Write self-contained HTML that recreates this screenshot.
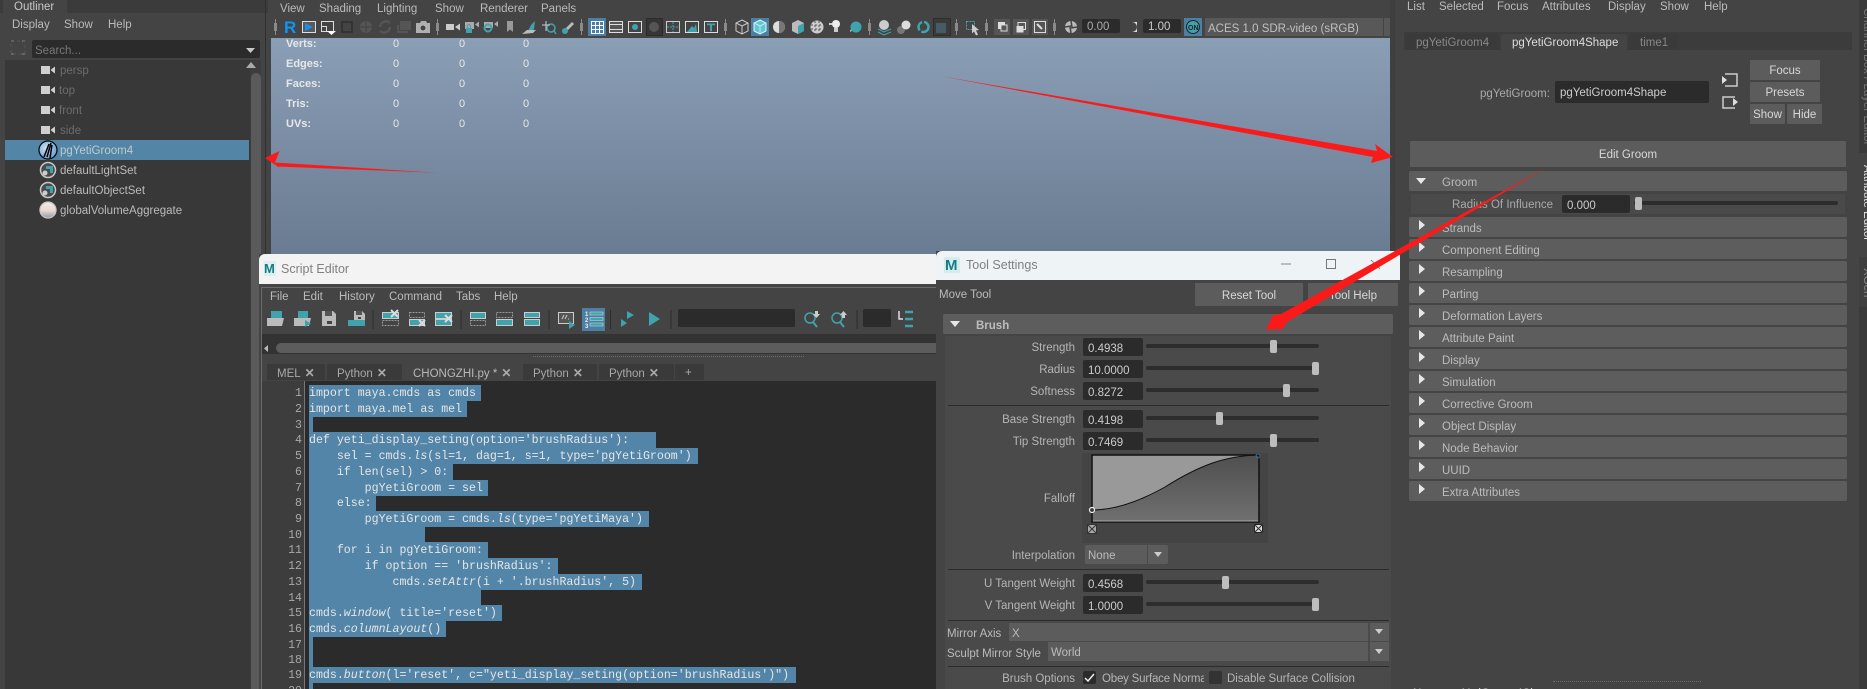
<!DOCTYPE html>
<html><head><meta charset="utf-8"><title>Maya</title>
<style>
html,body{margin:0;padding:0;width:1867px;height:689px;overflow:hidden;background:#444}
#r{position:relative;width:1867px;height:689px;overflow:hidden;background:#444;font:11.5px/14px "Liberation Sans",sans-serif;color:#bbb}
#r div{position:absolute;white-space:nowrap}
.m{line-height:16px;height:14px}
.d{color:#6c6c6c}
.b{background:#5c5c5c;color:#d8d8d8;text-align:center;border-radius:1px}
.f{left:1409px;width:438px;height:20px;background:#5d5d5d;border-radius:2px;line-height:24px;text-indent:33px;color:#bcbcbc}
.f i{position:absolute;left:10px;top:3px;width:0;height:0;border-left:6px solid #e8e8e8;border-top:5.5px solid transparent;border-bottom:5.5px solid transparent}
.in{background:#2b2b2b;border-radius:2px;color:#ccc;line-height:22px;text-indent:5px}
.tr{left:1146px;width:173px;height:4px;background:#2d2d2d;border-radius:2px}
.h{width:7px;height:13px;background:#bdbdbd;border-radius:2px}
.lb{right:792px;text-align:right;height:14px;line-height:16px;color:#b5b5b5}
.sep{left:948px;width:441px;height:1px;background:#2c2c2c}
.st{left:286px;color:#e8e8e8;height:14px;line-height:16px;font-size:11px;font-weight:bold}
.z{color:#e8e8e8;height:14px;line-height:16px;font-size:11px}
.tab{top:364px;height:16px;background:#3a3a3a;line-height:19px;color:#a8a8a8;border-radius:2px 2px 0 0;text-indent:10px}
.tab b{color:#aaa;margin-left:4px;font-size:12px}
#r div.l{left:309px;height:16px;background:#5285a8;font:11.6px/18px "Liberation Mono",monospace;color:#e6e6e6;white-space:pre}
.n{left:261px;width:41px;text-align:right;height:16px;font:11.6px/18px "Liberation Mono",monospace;color:#a8a8a8}
.v{writing-mode:vertical-rl;left:1860px;width:14px;line-height:14px}
</style></head><body><div id="r">

<!-- Outliner -->
<div style="left:0;top:0;width:268px;height:13px;background:#3b3b3b"></div>
<div style="left:3px;top:0;width:64px;height:13px;background:#444"></div>
<div class="m" style="left:14px;top:-1px;color:#c8c8c8">Outliner</div>
<div class="m" style="left:12px;top:17px">Display</div>
<div class="m" style="left:64px;top:17px">Show</div>
<div class="m" style="left:108px;top:17px">Help</div>
<div style="left:32px;top:40px;width:228px;height:18px;background:#2b2b2b;border-radius:2px;line-height:22px;text-indent:3px;color:#777">Search...</div>
<div style="left:5px;top:60px;width:245px;height:629px;background:#383838"></div>
<div style="left:250px;top:60px;width:11px;height:629px;background:#3d3d3d"></div>
<div style="left:251px;top:73px;width:10px;height:616px;background:#5a5a5a;border-radius:5px 5px 0 0"></div>
<div class="m d" style="left:60px;top:63px">persp</div>
<div class="m d" style="left:59px;top:83px">top</div>
<div class="m d" style="left:59px;top:103px">front</div>
<div class="m d" style="left:60px;top:123px">side</div>
<div style="left:5px;top:140px;width:244px;height:20px;background:#5285a6"></div>
<div class="m" style="left:60px;top:143px;color:#bfc9d0">pgYetiGroom4</div>
<div class="m" style="left:60px;top:163px">defaultLightSet</div>
<div class="m" style="left:60px;top:183px">defaultObjectSet</div>
<div class="m" style="left:60px;top:203px">globalVolumeAggregate</div>
<div style="left:265px;top:0;width:1px;height:254px;background:#303030"></div>

<!-- Viewport -->
<div style="left:271px;top:38px;width:1119px;height:220px;background:linear-gradient(#8a9eb6,#697b91)"></div>
<div class="m" style="left:280px;top:1px">View</div>
<div class="m" style="left:319px;top:1px">Shading</div>
<div class="m" style="left:377px;top:1px">Lighting</div>
<div class="m" style="left:435px;top:1px">Show</div>
<div class="m" style="left:480px;top:1px">Renderer</div>
<div class="m" style="left:541px;top:1px">Panels</div>
<div class="st" style="top:36px">Verts:</div><div class="st" style="top:56px">Edges:</div><div class="st" style="top:76px">Faces:</div><div class="st" style="top:96px">Tris:</div><div class="st" style="top:116px">UVs:</div>
<div class="z" style="left:393px;top:36px">0</div><div class="z" style="left:459px;top:36px">0</div><div class="z" style="left:523px;top:36px">0</div>
<div class="z" style="left:393px;top:56px">0</div><div class="z" style="left:459px;top:56px">0</div><div class="z" style="left:523px;top:56px">0</div>
<div class="z" style="left:393px;top:76px">0</div><div class="z" style="left:459px;top:76px">0</div><div class="z" style="left:523px;top:76px">0</div>
<div class="z" style="left:393px;top:96px">0</div><div class="z" style="left:459px;top:96px">0</div><div class="z" style="left:523px;top:96px">0</div>
<div class="z" style="left:393px;top:116px">0</div><div class="z" style="left:459px;top:116px">0</div><div class="z" style="left:523px;top:116px">0</div>
<div style="left:588px;top:18px;width:18px;height:18px;background:#4b7fa3"></div>
<div style="left:646px;top:18px;width:17px;height:18px;background:#353535;box-sizing:border-box;border:1px solid #2b2b2b"></div>
<div style="left:751px;top:18px;width:18px;height:18px;background:#4b7fa3"></div>
<div style="left:933px;top:18px;width:18px;height:18px;background:#3a3a3a;box-sizing:border-box;border:1px solid #2e2e2e"></div>
<div style="left:994px;top:19px;width:16px;height:16px;background:#555"></div>
<div style="left:1013px;top:19px;width:16px;height:16px;background:#555"></div>
<div style="left:1032px;top:19px;width:16px;height:16px;background:#555"></div>
<div class="in" style="left:1082px;top:19px;width:38px;height:14px;line-height:17px;color:#aaa">0.00</div>
<div class="in" style="left:1143px;top:19px;width:38px;height:14px;line-height:17px">1.00</div>
<div style="left:1184px;top:18px;width:18px;height:18px;background:#4b7fa3"></div>
<div style="left:1205px;top:18px;width:178px;height:18px;background:#585858;line-height:22px;text-indent:3px;color:#c0c0c0">ACES 1.0 SDR-video (sRGB)</div>
<div style="left:1384px;top:18px;width:6px;height:18px;background:#585858"></div>

<!-- Attribute Editor -->
<div style="left:1390px;top:0;width:5px;height:689px;background:#3f3f3f"></div>
<div class="m" style="left:1407px;top:-1px">List</div>
<div class="m" style="left:1439px;top:-1px">Selected</div>
<div class="m" style="left:1497px;top:-1px">Focus</div>
<div class="m" style="left:1542px;top:-1px">Attributes</div>
<div class="m" style="left:1608px;top:-1px">Display</div>
<div class="m" style="left:1660px;top:-1px">Show</div>
<div class="m" style="left:1704px;top:-1px">Help</div>
<div style="left:1404px;top:32px;width:448px;height:18px;background:#3c3c3c"></div>
<div style="left:1406px;top:34px;width:93px;height:16px;background:#3a3a3a;border:0;border-radius:3px 3px 0 0;line-height:19px;text-indent:10px;color:#888">pgYetiGroom4</div>
<div style="left:1501px;top:34px;width:126px;height:16px;background:#444;border-radius:3px 3px 0 0;line-height:19px;text-indent:11px;color:#ddd">pgYetiGroom4Shape</div>
<div style="left:1629px;top:34px;width:49px;height:16px;background:#3a3a3a;border-radius:3px 3px 0 0;line-height:19px;text-indent:11px;color:#888">time1</div>
<div class="m" style="left:1480px;top:86px;color:#aaa">pgYetiGroom:</div>
<div class="in" style="left:1555px;top:81px;width:154px;height:22px;line-height:24px">pgYetiGroom4Shape</div>
<div class="b" style="left:1750px;top:60px;width:70px;height:20px;line-height:23px">Focus</div>
<div class="b" style="left:1750px;top:82px;width:70px;height:20px;line-height:23px">Presets</div>
<div class="b" style="left:1750px;top:104px;width:35px;height:20px;line-height:23px">Show</div>
<div class="b" style="left:1787px;top:104px;width:35px;height:20px;line-height:23px">Hide</div>
<div class="b" style="left:1410px;top:141px;width:436px;height:26px;line-height:29px">Edit Groom</div>
<div class="f" style="top:171px"><i style="left:7px;top:7px;border-top:6px solid #e8e8e8;border-left:5.5px solid transparent;border-right:5.5px solid transparent;border-bottom:0"></i>Groom</div>
<div style="left:1411px;top:194px;width:434px;height:20px;background:#4a4a4a"></div>
<div class="m" style="left:1452px;top:197px;color:#aaa">Radius Of Influence</div>
<div class="in" style="left:1562px;top:195px;width:68px;height:18px">0.000</div>
<div style="left:1634px;top:201px;width:204px;height:4px;background:#2d2d2d;border-radius:2px"></div>
<div class="h" style="left:1635px;top:197px"></div>
<div class="f" style="top:217px"><i></i>Strands</div>
<div class="f" style="top:239px"><i></i>Component Editing</div>
<div class="f" style="top:261px"><i></i>Resampling</div>
<div class="f" style="top:283px"><i></i>Parting</div>
<div class="f" style="top:305px"><i></i>Deformation Layers</div>
<div class="f" style="top:327px"><i></i>Attribute Paint</div>
<div class="f" style="top:349px"><i></i>Display</div>
<div class="f" style="top:371px"><i></i>Simulation</div>
<div class="f" style="top:393px"><i></i>Corrective Groom</div>
<div class="f" style="top:415px"><i></i>Object Display</div>
<div class="f" style="top:437px"><i></i>Node Behavior</div>
<div class="f" style="top:459px"><i></i>UUID</div>
<div class="f" style="top:481px"><i></i>Extra Attributes</div>
<div style="left:1553px;top:681px;width:148px;height:0;border-top:1px dotted #6e6e6e"></div>
<div class="m" style="left:1413px;top:686px;color:#ddd">Notes: pgYetiGroom4Shape</div>
<div style="left:1859px;top:0;width:8px;height:689px;background:#3a3a3a"></div>
<div style="left:1859px;top:153px;width:8px;height:104px;background:#444"></div>
<div style="left:1859px;top:257px;width:8px;height:50px;background:#3f3f3f"></div>
<div class="v" style="top:8px;color:#777">Channel Box / Layer Editor</div>
<div class="v" style="top:165px;color:#e0e0e0">Attribute Editor</div>
<div class="v" style="top:268px;color:#888">XGen</div>

<!-- Script Editor -->
<div style="left:259px;top:254px;width:690px;height:435px;background:#444"></div>
<div style="left:259px;top:254px;width:690px;height:30px;background:#f3f3f3;border-radius:6px 6px 0 0"></div>
<div style="left:281px;top:262px;font-size:12.5px;color:#808080">Script Editor</div>
<div style="left:261px;top:287px;width:1px;height:402px;background:#6a6a6a"></div>
<div style="left:261px;top:287px;width:680px;height:1px;background:#6a6a6a"></div>
<div class="m" style="left:270px;top:289px">File</div>
<div class="m" style="left:303px;top:289px">Edit</div>
<div class="m" style="left:339px;top:289px">History</div>
<div class="m" style="left:389px;top:289px">Command</div>
<div class="m" style="left:456px;top:289px">Tabs</div>
<div class="m" style="left:494px;top:289px">Help</div>
<div style="left:582px;top:308px;width:23px;height:23px;background:#4b7fa3"></div>
<div style="left:678px;top:309px;width:117px;height:18px;background:#2b2b2b;border-radius:2px"></div>
<div style="left:863px;top:309px;width:28px;height:18px;background:#2b2b2b;border-radius:2px"></div>
<div style="left:262px;top:334px;width:680px;height:20px;background:#333"></div>
<div style="left:276px;top:343px;width:670px;height:10px;background:#5c5c5c;border-radius:5px"></div>
<div style="left:533px;top:356px;width:271px;height:0;border-top:1px dotted #6e6e6e"></div>
<div class="tab" style="left:267px;width:58px">MEL<b>✕</b></div>
<div class="tab" style="left:327px;width:75px">Python<b>✕</b></div>
<div class="tab" style="left:403px;width:118px;background:#444;color:#b8b8b8">CHONGZHI.py *<b>✕</b></div>
<div class="tab" style="left:523px;width:74px">Python<b>✕</b></div>
<div class="tab" style="left:599px;width:75px">Python<b>✕</b></div>
<div class="tab" style="left:675px;width:29px">+</div>
<div style="left:262px;top:381px;width:42px;height:308px;background:#3d3d3d"></div>
<div style="left:304px;top:381px;width:1px;height:308px;background:#777"></div>
<div style="left:305px;top:381px;width:640px;height:308px;background:#2b2b2b"></div>

<div class="n" style="top:385px">1</div><div class="l" style="top:385px;width:172px">import maya.cmds as cmds</div>
<div class="n" style="top:401px">2</div><div class="l" style="top:401px;width:158px">import maya.mel as mel</div>
<div class="n" style="top:417px">3</div><div class="l" style="top:417px;width:4px"></div>
<div class="n" style="top:432px">4</div><div class="l" style="top:432px;width:347px">def yeti_display_seting(option='brushRadius'):</div>
<div class="n" style="top:448px">5</div><div class="l" style="top:448px;width:389px">    sel = cmds.<i>ls</i>(sl=1, dag=1, s=1, type='pgYetiGroom')</div>
<div class="n" style="top:464px">6</div><div class="l" style="top:464px;width:144px">    if len(sel) &gt; 0:</div>
<div class="n" style="top:480px">7</div><div class="l" style="top:480px;width:179px">        pgYetiGroom = sel</div>
<div class="n" style="top:495px">8</div><div class="l" style="top:495px;width:67px">    else:</div>
<div class="n" style="top:511px">9</div><div class="l" style="top:511px;width:340px">        pgYetiGroom = cmds.<i>ls</i>(type='pgYetiMaya')</div>
<div class="n" style="top:527px">10</div><div class="l" style="top:527px;width:116px"></div>
<div class="n" style="top:542px">11</div><div class="l" style="top:542px;width:179px">    for i in pgYetiGroom:</div>
<div class="n" style="top:558px">12</div><div class="l" style="top:558px;width:249px">        if option == 'brushRadius':</div>
<div class="n" style="top:574px">13</div><div class="l" style="top:574px;width:333px">            cmds.<i>setAttr</i>(i + '.brushRadius', 5)</div>
<div class="n" style="top:590px">14</div><div class="l" style="top:590px;width:172px"></div>
<div class="n" style="top:605px">15</div><div class="l" style="top:605px;width:193px">cmds.<i>window</i>( title='reset')</div>
<div class="n" style="top:621px">16</div><div class="l" style="top:621px;width:137px">cmds.<i>columnLayout</i>()</div>
<div class="n" style="top:637px">17</div><div class="l" style="top:637px;width:4px"></div>
<div class="n" style="top:652px">18</div><div class="l" style="top:652px;width:4px"></div>
<div class="n" style="top:667px">19</div><div class="l" style="top:667px;width:487px">cmds.<i>button</i>(l='reset', c="yeti_display_seting(option='brushRadius')")</div>
<div class="n" style="top:683px">20</div><div class="l" style="top:683px;width:4px"></div>

<!-- Tool Settings -->
<div style="left:936px;top:251px;width:464px;height:438px;background:#444"></div>
<div style="left:936px;top:251px;width:464px;height:29px;background:#eef4f6;border-radius:6px 6px 0 0"></div>
<div style="left:966px;top:258px;font-size:12.5px;color:#808080">Tool Settings</div>
<div class="m" style="left:939px;top:287px">Move Tool</div>
<div class="b" style="left:1195px;top:283px;width:108px;height:23px;line-height:26px">Reset Tool</div>
<div class="b" style="left:1308px;top:283px;width:90px;height:23px;line-height:26px">Tool Help</div>
<div class="f" style="left:943px;top:314px;width:450px;text-indent:33px;font-weight:bold"><i style="left:7px;top:7px;border-top:6px solid #e8e8e8;border-left:5.5px solid transparent;border-right:5.5px solid transparent;border-bottom:0"></i>Brush</div>
<div style="left:945px;top:336px;width:446px;height:353px;background:#4a4a4a"></div>
<div class="lb" style="top:340px">Strength</div><div class="in" style="left:1083px;top:338px;width:60px;height:18px">0.4938</div><div class="tr" style="top:344px"></div><div class="h" style="left:1270px;top:340px"></div>
<div class="lb" style="top:362px">Radius</div><div class="in" style="left:1083px;top:360px;width:60px;height:18px">10.0000</div><div class="tr" style="top:366px"></div><div class="h" style="left:1312px;top:362px"></div>
<div class="lb" style="top:384px">Softness</div><div class="in" style="left:1083px;top:382px;width:60px;height:18px">0.8272</div><div class="tr" style="top:388px"></div><div class="h" style="left:1283px;top:384px"></div>
<div class="sep" style="top:405px"></div>
<div class="lb" style="top:412px">Base Strength</div><div class="in" style="left:1083px;top:410px;width:60px;height:18px">0.4198</div><div class="tr" style="top:416px"></div><div class="h" style="left:1216px;top:412px"></div>
<div class="lb" style="top:434px">Tip Strength</div><div class="in" style="left:1083px;top:432px;width:60px;height:18px">0.7469</div><div class="tr" style="top:438px"></div><div class="h" style="left:1270px;top:434px"></div>
<div style="left:1082px;top:453px;width:186px;height:90px;background:#444"></div>
<div class="lb" style="top:491px">Falloff</div>
<div class="lb" style="top:548px">Interpolation</div>
<div style="left:1085px;top:545px;width:62px;height:19px;background:#5c5c5c;border-radius:2px 0 0 2px;line-height:23px;text-indent:3px">None</div>
<div style="left:1148px;top:545px;width:20px;height:19px;background:#5c5c5c;border-radius:0 2px 2px 0"></div>
<div style="left:1154px;top:552px;width:0;height:0;border-top:5px solid #ccc;border-left:4.5px solid transparent;border-right:4.5px solid transparent"></div>
<div class="sep" style="top:569px"></div>
<div class="lb" style="top:576px">U Tangent Weight</div><div class="in" style="left:1083px;top:574px;width:60px;height:18px">0.4568</div><div class="tr" style="top:580px"></div><div class="h" style="left:1222px;top:576px"></div>
<div class="lb" style="top:598px">V Tangent Weight</div><div class="in" style="left:1083px;top:596px;width:60px;height:18px">1.0000</div><div class="tr" style="top:602px"></div><div class="h" style="left:1312px;top:598px"></div>
<div class="sep" style="top:620px"></div>
<div class="m" style="left:947px;top:626px">Mirror Axis</div>
<div style="left:1009px;top:623px;width:359px;height:18px;background:#5c5c5c;line-height:22px;text-indent:3px">X</div>
<div style="left:1370px;top:623px;width:19px;height:18px;background:#5c5c5c"></div>
<div style="left:1375px;top:629px;width:0;height:0;border-top:5px solid #ccc;border-left:4.5px solid transparent;border-right:4.5px solid transparent"></div>
<div class="m" style="left:947px;top:646px">Sculpt Mirror Style</div>
<div style="left:1048px;top:642px;width:320px;height:19px;background:#5c5c5c;line-height:23px;text-indent:3px">World</div>
<div style="left:1370px;top:642px;width:19px;height:19px;background:#5c5c5c"></div>
<div style="left:1375px;top:649px;width:0;height:0;border-top:5px solid #ccc;border-left:4.5px solid transparent;border-right:4.5px solid transparent"></div>
<div class="sep" style="top:666px"></div>
<div class="lb" style="top:671px">Brush Options</div>
<div style="left:1083px;top:671px;width:13px;height:13px;background:#2b2b2b;border-radius:2px"></div>
<div style="left:1102px;top:671px;width:102px;overflow:hidden;height:16px;line-height:16px;color:#b5b5b5;letter-spacing:-.2px">Obey Surface Normals</div>
<div style="left:1209px;top:671px;width:13px;height:13px;background:#333;border-radius:2px"></div>
<div class="m" style="left:1227px;top:671px;color:#b5b5b5">Disable Surface Collision</div>

<!-- Icons and annotations -->
<svg width="1867" height="689" viewBox="0 0 1867 689" style="position:absolute;left:0;top:0" fill="none">
<defs>
<linearGradient id="fa" x1="0" y1="0" x2="0" y2="1"><stop offset="0" stop-color="#4f4f4f"/><stop offset="1" stop-color="#707070"/></linearGradient>
<radialGradient id="bl" cx=".4" cy=".4" r=".7"><stop offset="0" stop-color="#cfe4f7"/><stop offset="1" stop-color="#5d96cf"/></radialGradient>
<linearGradient id="gv" x1="0" y1="0" x2="0" y2="1"><stop offset="0" stop-color="#eee"/><stop offset=".55" stop-color="#ead8d0"/><stop offset="1" stop-color="#8f97ad"/></linearGradient>
</defs>
<!-- outliner icons -->
<path d="M11 41h3M22 41h3M11 54h3M22 54h3" stroke="#666" stroke-width="2"/><rect x="11" y="41" width="14" height="13" stroke="#555" stroke-dasharray="3 3"/>
<path d="M246 48h9l-4.500 5z" fill="#c8c8c8"/><path d="M251 62l5 6h-10z" fill="#aaa"/>
<g fill="#cfcfcf"><path d="M41 66h9v8h-9zM51 69.500l4-3v7l-4-3z"/><path d="M41 86h9v8h-9zM51 89.500l4-3v7l-4-3z"/><path d="M41 106h9v8h-9zM51 109.500l4-3v7l-4-3z"/><path d="M41 126h9v8h-9zM51 129.500l4-3v7l-4-3z"/></g>
<circle cx="48" cy="150" r="9" fill="url(#bl)" stroke="#000" stroke-width="1.200"/><path d="M44 157l5-13M47 157l4-14M50 158l2-13" stroke="#000" stroke-width="1.500"/>
<circle cx="48" cy="170" r="7.500" fill="#4a4a4a" stroke="#c8c8c8" stroke-width="1.500"/><path d="M46 166h7v7h-3v-4h-4z" fill="#3fa3ad"/><circle cx="45" cy="173" r="2.500" fill="#ccc"/>
<circle cx="48" cy="190" r="7.500" fill="#4a4a4a" stroke="#c8c8c8" stroke-width="1.500"/><path d="M46 186h7v7h-3v-4h-4z" fill="#3fa3ad"/><circle cx="45" cy="193" r="2.500" fill="#ccc"/>
<circle cx="48" cy="210" r="8" fill="url(#gv)" stroke="#c8c8c8" stroke-width="1.300"/>

<!-- viewport toolbar -->
<g fill="#8a8a8a"><path d="M275 19h1v4h1v8h-1v4h-1v-4h-1v-8h1zM437 19h1v4h1v8h-1v4h-1v-4h-1v-8h1zM581 19h1v4h1v8h-1v4h-1v-4h-1v-8h1zM725 19h1v4h1v8h-1v4h-1v-4h-1v-8h1zM869 19h1v4h1v8h-1v4h-1v-4h-1v-8h1zM956 19h1v4h1v8h-1v4h-1v-4h-1v-8h1zM986 19h1v4h1v8h-1v4h-1v-4h-1v-8h1zM1054 19h1v4h1v8h-1v4h-1v-4h-1v-8h1z"/></g>
<text x="284" y="33" font-family="Liberation Sans" font-weight="bold" font-size="17" fill="#0d96f2">R</text>
<rect x="302.500" y="21.500" width="13" height="11" fill="#5a5a5a" stroke="#ddd"/><path d="M305 23l8 4-8 4z" fill="#1b8ef0"/>
<path d="M321.500 21.500h12v10h-12zM321.500 26.500h5v5" stroke="#ddd"/><path d="M327 31h9l-4.500 4z" fill="#fff"/>
<rect x="342" y="22" width="10" height="10" stroke="#333" stroke-width="2"/>
<circle cx="366" cy="27" r="6" fill="#555"/><path d="M360 27h12M366 21v12" stroke="#444"/>
<path d="M380 27a6 6 0 0 1 10-4M390 27a6 6 0 0 1-10 4" stroke="#555" stroke-width="2.500"/>
<rect x="400" y="21" width="11" height="9" fill="#555"/><path d="M398 25v7h10" stroke="#555" stroke-width="2"/>
<path d="M416 23h4l1-2h5l1 2h3v10h-14z" fill="#b0b0b0"/><circle cx="423" cy="28" r="3" fill="#444" stroke="#b8b8b8"/>
<path d="M446 24h8v6h-8zM455 27l5-3.500v7z" fill="#ccc"/>
<path d="M465 22h9v7h-9zM475 24.500l4-3v6z" fill="#aaa"/><rect x="466" y="28" width="6" height="5" fill="#3fa3ad"/><path d="M467.500 28v-2a1.500 1.500 0 0 1 3 0v2" stroke="#3fa3ad"/>
<path d="M484 22h9v6h-9zM494 24l4-3v6z" fill="#aaa"/><circle cx="488" cy="28" r="3.500" stroke="#3fa3ad" stroke-width="2"/>
<path d="M507 21h6v11l-3-2.500-3 2.500z" fill="#999"/>
<path d="M527 33l4-8 4-4-1 8-4 4z" fill="#3fa3ad"/><path d="M522 34l5-4h9l-3 3z" fill="#bbb"/>
<circle cx="551" cy="28" r="4" stroke="#3fa3ad" stroke-width="1.500"/><path d="M554 31l2 3" stroke="#3fa3ad" stroke-width="1.500"/><path d="M546 21v10M542 25h8" stroke="#ccc"/>
<path d="M566 28l6-6 2 2-6 6z" fill="#bbb"/><circle cx="565" cy="31" r="3" fill="#3fa3ad"/>
<rect x="591.500" y="21.500" width="12" height="12" stroke="#fff"/><path d="M595.500 21v12M599.500 21v12M591 25.500h12M591 29.500h12" stroke="#fff"/>
<rect x="609.500" y="21.500" width="13" height="11" fill="#555" stroke="#ddd"/><path d="M609 24.500h14M609 29.500h14" stroke="#ddd"/>
<rect x="628.500" y="21.500" width="13" height="11" stroke="#ddd"/><circle cx="635" cy="27" r="3" fill="#3fa3ad"/>
<circle cx="654" cy="27" r="5" fill="#555"/>
<rect x="666.500" y="21.500" width="13" height="11" stroke="#ccc"/><path d="M673 22v10M667 27h12" stroke="#3fa3ad" stroke-dasharray="2 1"/>
<rect x="685.500" y="21.500" width="13" height="11" stroke="#ddd"/><path d="M687 32l5-6 2 2 2-4 1 8z" fill="#3fa3ad"/>
<rect x="704.500" y="21.500" width="13" height="11" stroke="#ddd"/><path d="M707 23.500h8v1.700h-3v6h-2v-6h-3z" fill="#3fa3ad"/>
<path d="M742 20l6 3v8l-6 3-6-3v-8zM736 23l6 3 6-3M742 26v8" stroke="#ccc"/>
<path d="M760 20l6 3v8l-6 3-6-3v-8z" fill="#63c6d2" stroke="#dff"/><path d="M754 23l6 3 6-3M760 26v8" stroke="#bfeef4"/>
<circle cx="779" cy="27" r="6" fill="#ddd"/><path d="M779 21a6 6 0 0 1 0 12z" fill="#777"/>
<path d="M798 20l6 3v8l-6 3-6-3v-8z" fill="#bbb"/><path d="M798 26l6-3v8l-6 3z" fill="#3fa3ad"/>
<circle cx="817" cy="27" r="6.500" fill="#ccc"/><path d="M811 25h12M811 29h12M815 21v12M819 21v12" stroke="#555" stroke-dasharray="2 2"/>
<path d="M829 24h3" stroke="#ccc" stroke-width="2"/>
<circle cx="836" cy="24" r="4" fill="#eee"/><rect x="834" y="28" width="4" height="4" fill="#ccc"/>
<path d="M850 32l6-3v-2l-6 3z" fill="#aaa"/><circle cx="856" cy="27" r="5.500" fill="#3fa3ad"/>
<circle cx="884" cy="25" r="5" fill="#ccc"/><path d="M878 29l6 3 7-3M878 32l6 3 7-3" stroke="#3fa3ad"/>
<circle cx="901" cy="30" r="4" fill="#777"/><circle cx="906" cy="25" r="4.500" fill="#ddd"/>
<circle cx="923.500" cy="27" r="5" stroke="#3fa3ad" stroke-width="2.500" stroke-dasharray="10 2"/>
<rect x="936" y="23" width="10" height="10" fill="#455c64"/>
<rect x="966.500" y="21.500" width="8" height="8" stroke="#3fa3ad" stroke-dasharray="2 1"/><path d="M972 24l7 6-3 .5 2 4-2 1-2-4-2 2z" fill="#ccc"/>
<rect x="998" y="22" width="7" height="7" fill="#ddd"/><rect x="1001" y="25" width="6" height="6" fill="#555" stroke="#ddd"/>
<rect x="1018" y="22.500" width="7.500" height="7" stroke="#ddd"/><rect x="1016.500" y="26" width="7" height="6.500" fill="#ddd"/>
<rect x="1034.500" y="21.500" width="11" height="11" stroke="#ddd"/><path d="M1037 24l5 5" stroke="#ddd" stroke-width="2"/>
<circle cx="1071" cy="27" r="6" fill="#bbb"/><path d="M1071 21l1 6M1077 27l-6 1M1071 33l-1-6M1065 27l6-1" stroke="#444" stroke-width="1.500"/>
<path d="M1132 22h5v10h-5a5 5 0 0 0 0-10z" fill="#ddd"/>
<circle cx="1193" cy="27" r="6.500" fill="#3fa3ad" stroke="#222"/>
<text x="1188" y="30" font-family="Liberation Sans" font-weight="bold" font-size="7" fill="#222">ON</text>

<!-- AE icons -->
<path d="M1725 74h12v12h-12" stroke="#ccc" stroke-width="1.500"/><path d="M1722 76l5 4-5 4z" fill="#ddd"/>
<path d="M1735 97h-12v11h12" stroke="#ccc" stroke-width="1.500"/><path d="M1733 98l5 4-5 4z" fill="#ddd"/>

<!-- Script editor window icons -->
<rect x="264" y="261" width="12" height="15" fill="#dceeee"/><text x="264" y="273" font-family="Liberation Sans" font-weight="bold" font-size="13" fill="#127d85">M</text>
<rect x="944" y="257" width="16" height="16" fill="#d6ecec"/><text x="945" y="270" font-family="Liberation Sans" font-weight="bold" font-size="15" fill="#127d85">M</text>
<path d="M1281 264h10" stroke="#888"/><rect x="1326.500" y="259.500" width="9" height="9" stroke="#777"/>
<path d="M1371 260l9 9M1380 260l-9 9" stroke="#888"/>
<path d="M268 345l-4 3.500 4 3.500z" fill="#bbb"/>
<g>
<path d="M267 326v-8h4v-1h2v1h11l-2 8z" fill="#bbb"/><rect x="271" y="311" width="11" height="7" fill="#3fa3ad"/>
<path d="M294 326v-8h4v-1h2v1h11l-2 8z" fill="#bbb"/><rect x="298" y="311" width="10" height="7" fill="#3fa3ad"/><path d="M305 320l6 3.500-6 3.500z" fill="#3fa3ad"/>
<path d="M322 311h11l3 3v12h-14z" fill="#bbb"/><rect x="325" y="311" width="7" height="5" fill="#555"/><rect x="327" y="321" width="5" height="3" fill="#444"/>
<path d="M354 311h8l3 3v7h-11z" fill="#bbb"/><rect x="356" y="311" width="6" height="4" fill="#555"/><rect x="358" y="317" width="3" height="2" fill="#444"/><rect x="348" y="320" width="17" height="6" fill="#3fa3ad"/>
<rect x="382.500" y="312.500" width="16" height="6" fill="#3fa3ad" stroke="#ccc"/><rect x="382.500" y="320.500" width="16" height="5" stroke="#999" stroke-dasharray="2 1"/><path d="M391 310l7 7M398 310l-7 7" stroke="#ddd" stroke-width="2"/>
<rect x="409.500" y="312.500" width="15" height="5" stroke="#999" stroke-dasharray="2 1"/><rect x="409.500" y="319.500" width="15" height="6" fill="#3fa3ad" stroke="#ccc"/><path d="M419 320l6 6M425 320l-6 6" stroke="#ddd" stroke-width="2"/>
<rect x="435.500" y="312.500" width="16" height="6" fill="#3fa3ad" stroke="#ccc"/><rect x="435.500" y="319.500" width="16" height="6" fill="#3fa3ad" stroke="#ccc"/><path d="M445 315l7 7M452 315l-7 7" stroke="#ddd" stroke-width="2"/>
<rect x="470.500" y="312.500" width="15" height="6" fill="#3fa3ad" stroke="#ccc"/><rect x="470.500" y="320.500" width="15" height="5" stroke="#999" stroke-dasharray="2 1"/>
<rect x="496.500" y="312.500" width="16" height="5" stroke="#999" stroke-dasharray="2 1"/><rect x="496.500" y="319.500" width="16" height="6" fill="#3fa3ad" stroke="#ccc"/>
<rect x="524.500" y="312.500" width="15" height="5" fill="#3fa3ad" stroke="#ccc"/><rect x="524.500" y="319.500" width="15" height="6" fill="#3fa3ad" stroke="#ccc"/>
<rect x="558.500" y="312.500" width="15" height="11" fill="#555" stroke="#ccc"/><path d="M569 321l6 4-6 4z" fill="#3fa3ad"/><path d="M562 319l2-4M565 319l2-4M568 319h1" stroke="#ccc"/>
<path d="M590 312h13v3h-13zM590 317.500h13v3h-13zM590 323h13v3h-13z" fill="#3fa3ad" stroke="#ddd" stroke-width=".6"/>
<text x="585" y="316" font-family="Liberation Sans" font-size="6" font-weight="bold" fill="#eee">1</text><text x="585" y="322" font-family="Liberation Sans" font-size="6" font-weight="bold" fill="#eee">2</text><text x="585" y="328" font-family="Liberation Sans" font-size="6" font-weight="bold" fill="#eee">3</text>
<path d="M627 311l7 4-7 4zM621 319l6 4-6 4z" fill="#3fa3ad"/>
<path d="M649 312l11 7-11 7z" fill="#3fa3ad"/>
<circle cx="810" cy="318" r="5" stroke="#3fa3ad" stroke-width="1.500"/><path d="M813 322l4 5" stroke="#3fa3ad" stroke-width="2"/><path d="M815 311h3v3h2l-3.500 4-3.500-4h2z" fill="#ccc"/>
<circle cx="837" cy="318" r="5" stroke="#3fa3ad" stroke-width="1.500"/><path d="M840 322l4 5" stroke="#3fa3ad" stroke-width="2"/><path d="M842 318h3v-3h2l-3.500-4-3.500 4h2z" fill="#ccc"/>
<path d="M899 311v8h4" stroke="#ddd" stroke-width="1.500"/><path d="M905 312h8M905 319h8M905 326h8" stroke="#3fa3ad" stroke-width="2.500"/>
</g>
<path d="M373 310v19M461 310v19M549 310v19M610.500 310v19M671 310v19M857 310v19" stroke="#2d2d2d"/>

<!-- Falloff graph -->
<rect x="1092" y="455" width="167" height="67" fill="url(#fa)"/>
<path d="M1092 455H1258C1225 456 1200 465 1165 487C1140 501 1115 510 1092 510z" fill="#999"/>
<path d="M1092 510C1115 510 1140 501 1165 487C1200 465 1225 456 1258 455" stroke="#111" stroke-width="1"/>
<rect x="1092" y="455" width="167" height="67" stroke="#111" stroke-width="1.500"/>
<path d="M1093 521h165" stroke="#aaa"/>
<circle cx="1092" cy="510" r="2.500" fill="#333" stroke="#eee" stroke-width="1.200"/>
<circle cx="1258" cy="456" r="2" stroke="#3a6a9a"/>
<rect x="1087.500" y="524.500" width="9" height="9" fill="#aaa" stroke="#333"/><path d="M1088 525l8 8M1096 525l-8 8" stroke="#333"/>
<rect x="1254.500" y="524.500" width="8" height="8" rx="1" fill="#ddd" stroke="#222"/><path d="M1255 525l7 7M1262 525l-7 7" stroke="#333"/>
<path d="M1085 678l3 3 6-7" stroke="#eee" stroke-width="1.500"/>

<!-- Red arrows -->
<path d="M265 158L279.500 151L275 162.500L436 172.700L277 166.500L280 168z" fill="#fb1a1a"/>
<path d="M940 76L1377 151L1375 144L1393 157L1371 163L1373 157z" fill="#fb1a1a"/>
<path d="M1547 167L1281 314L1273 315L1266 330L1283 329L1287 322z" fill="#fb1a1a"/>
</svg>
</div></body></html>
